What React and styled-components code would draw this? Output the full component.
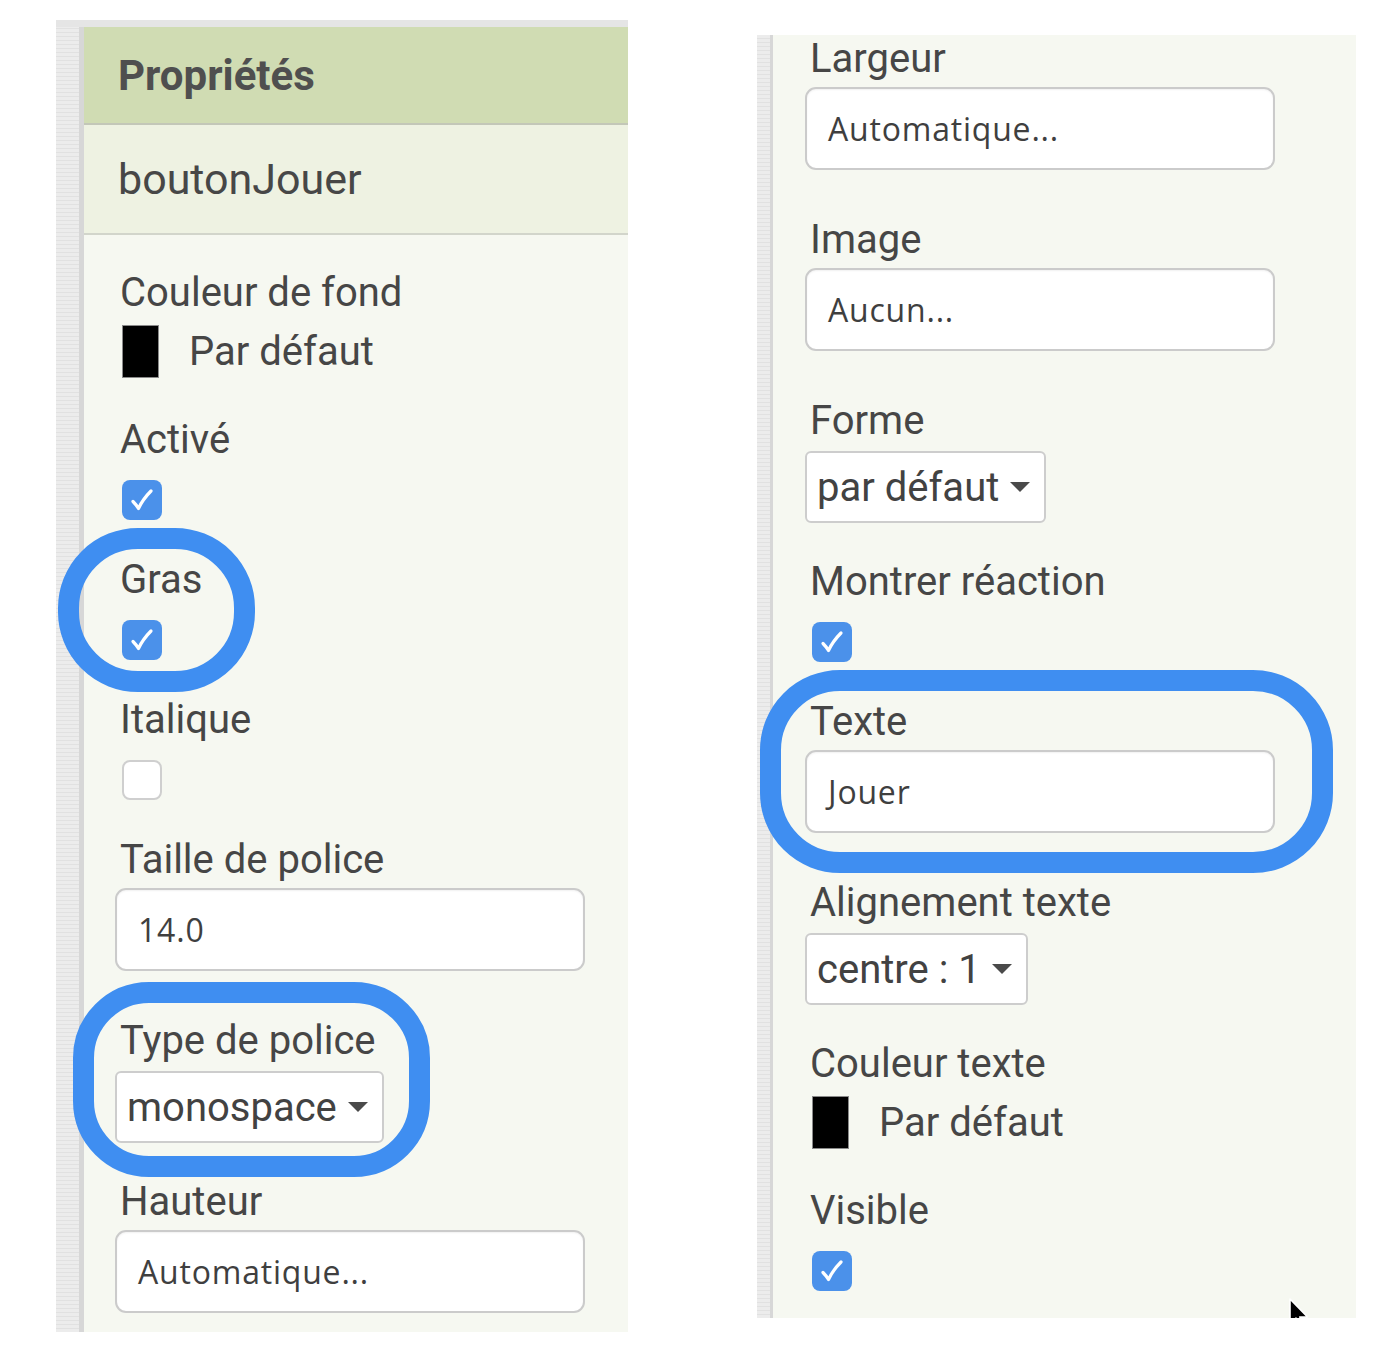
import React from 'react';
import styled, { createGlobalStyle } from 'styled-components';

const GlobalStyle = createGlobalStyle`
  html, body {
    margin: 0;
    background: #ffffff;
  }
  body {
    font-family: Roboto, "Liberation Sans", sans-serif;
    color: #484848;
  }
`;

const Page = styled.div`
  display: flex;
  align-items: flex-start;
  gap: 129px;
  padding: 20px 0 0 56px;
`;

const Panel = styled.section`
  position: relative;
  display: flex;
  box-sizing: border-box;
  width: ${p => p.width}px;
  height: ${p => p.height}px;
  margin-top: ${p => p.offset || 0}px;
  overflow: hidden;
  background: #f6f8f1;
  border-top: ${p => (p.topStrip ? '7px solid #e5e5e5' : 'none')};
`;

const Rail = styled.div`
  flex: 0 0 auto;
  width: ${p => p.width}px;
  box-sizing: border-box;
  background: repeating-linear-gradient(
    0deg,
    #ececec 0 3px,
    #e1e1e1 3px 4px
  );
  border-right: ${p => p.line}px solid #d7d7d7;
`;

const Body = styled.div`
  flex: 1;
  display: flex;
  flex-direction: column;
  min-width: 0;

  & > * {
    flex-shrink: 0;
  }
`;

const Header = styled.div`
  display: flex;
  align-items: center;
  height: 96px;
  padding-left: 34px;
  background: #d0dcb3;
  border-bottom: 2px solid #c3c7b8;
  font-size: 42px;
  font-weight: 700;
  color: #4f4f4f;
`;

const NameRow = styled.div`
  display: flex;
  align-items: center;
  height: 108px;
  padding-left: 34px;
  background: #eef2e2;
  border-bottom: 2px solid #d2d5cb;
  font-size: 43px;
  color: #474747;
`;

const Content = styled.div`
  display: flex;
  flex-direction: column;
  align-items: flex-start;
  padding: ${p => p.top}px 0 0 ${p => p.left}px;
`;

const spacing = { color: 40, check: 38, input: 48, select: 37 };

const Property = styled.div`
  position: relative;
  align-self: stretch;
  display: flex;
  flex-direction: column;
  align-items: flex-start;
  margin-bottom: ${p => spacing[p.kind]}px;
`;

const Label = styled.div`
  padding-left: 5px;
  font-size: 40px;
  line-height: 44px;
  color: #464646;
  white-space: nowrap;
`;

const ColorRow = styled.div`
  display: flex;
  align-items: center;
  margin-top: 10px;
  margin-left: 7px;
  font-size: 40px;
  line-height: 44px;
  color: #464646;
`;

const Swatch = styled.div`
  width: 37px;
  height: 53px;
  box-sizing: border-box;
  background: #000;
  border: 1px solid #8a8a8a;
  margin-right: 30px;
`;

const Box = styled.div`
  display: flex;
  align-items: center;
  justify-content: center;
  width: 40px;
  height: 40px;
  box-sizing: border-box;
  margin-top: 18px;
  margin-left: 7px;
  border-radius: 8px;
  background: ${p => (p.checked ? '#4b91ea' : '#ffffff')};
  border: ${p => (p.checked ? 'none' : '2px solid #cfcfcf')};
`;

const TextBox = styled.div`
  display: flex;
  align-items: center;
  box-sizing: border-box;
  width: 470px;
  height: 83px;
  margin-top: 6px;
  padding-left: 21px;
  background: #ffffff;
  border: 2px solid #cbcbcb;
  border-radius: 11px;
  box-shadow: inset 0 1px 2px rgba(0, 0, 0, 0.06);
  font-family: "Open Sans", "DejaVu Sans", sans-serif;
  font-size: 32px;
  letter-spacing: 0.8px;
  color: #3f3f3f;
`;

const Dropdown = styled.div`
  display: inline-flex;
  align-items: center;
  gap: 11px;
  box-sizing: border-box;
  height: 72px;
  margin-top: 8px;
  padding: 0 14px 0 10px;
  background: #ffffff;
  border: 2px solid #cdcdcd;
  border-radius: 6px;
  font-size: 40px;
  color: #424242;
  white-space: nowrap;
`;

const Ring = styled.div`
  position: absolute;
  z-index: 2;
  top: ${p => p.top}px;
  left: ${p => p.left}px;
  width: ${p => p.w}px;
  height: ${p => p.h}px;
  box-sizing: border-box;
  border: 21px solid #3f8ef1;
  border-radius: ${p => p.r}px;
  pointer-events: none;
`;

const Cursor = styled.svg`
  position: absolute;
  z-index: 3;
  left: 531px;
  top: 1262px;
`;

const Check = () => (
  <svg width="40" height="40" viewBox="0 0 40 40">
    <path
      d="M11 21.5 C13 23.5 15 26 16.5 28.5 C19.5 22 24 16 29 11"
      fill="none"
      stroke="#ffffff"
      strokeWidth="3.2"
      strokeLinecap="round"
      strokeLinejoin="round"
    />
  </svg>
);

const Caret = () => (
  <svg width="20" height="11" viewBox="0 0 20 11">
    <polygon points="0,0 20,0 10,10" fill="#4a4a4a" />
  </svg>
);

const CheckField = ({ label, checked, ring }) => (
  <Property kind="check">
    {ring}
    <Label>{label}</Label>
    <Box checked={checked}>{checked && <Check />}</Box>
  </Property>
);

const InputField = ({ label, value, ring }) => (
  <Property kind="input">
    {ring}
    <Label>{label}</Label>
    <TextBox>{value}</TextBox>
  </Property>
);

const SelectField = ({ label, value, ring }) => (
  <Property kind="select">
    {ring}
    <Label>{label}</Label>
    <Dropdown>
      {value}
      <Caret />
    </Dropdown>
  </Property>
);

const ColorField = ({ label, value }) => (
  <Property kind="color">
    <Label>{label}</Label>
    <ColorRow>
      <Swatch />
      {value}
    </ColorRow>
  </Property>
);

export default function App() {
  return (
    <>
      <GlobalStyle />
      <Page>
        <Panel width={572} height={1312} topStrip>
          <Rail width={28} line={5} />
          <Body>
            <Header>Propriétés</Header>
            <NameRow>boutonJouer</NameRow>
            <Content top={36} left={31}>
              <ColorField label="Couleur de fond" value="Par défaut" />
              <CheckField label="Activé" checked />
              <CheckField
                label="Gras"
                checked
                ring={<Ring top={-30} left={-57} w={197} h={164} r={80} />}
              />
              <CheckField label="Italique" />
              <InputField label="Taille de police" value="14.0" />
              <SelectField
                label="Type de police"
                value="monospace"
                ring={<Ring top={-37} left={-42} w={357} h={195} r={76} />}
              />
              <InputField label="Hauteur" value="Automatique..." />
            </Content>
          </Body>
        </Panel>

        <Panel width={599} height={1283} offset={15}>
          <Rail width={16} line={3} />
          <Body>
            <Content top={2} left={32}>
              <InputField label="Largeur" value="Automatique..." />
              <InputField label="Image" value="Aucun..." />
              <SelectField label="Forme" value="par défaut" />
              <CheckField label="Montrer réaction" checked />
              <InputField
                label="Texte"
                value="Jouer"
                ring={<Ring top={-30} left={-45} w={573} h={203} r={80} />}
              />
              <SelectField label="Alignement texte" value="centre : 1" />
              <ColorField label="Couleur texte" value="Par défaut" />
              <CheckField label="Visible" checked />
            </Content>
          </Body>
          <Cursor width="24" height="34" viewBox="0 0 24 34">
            <path
              d="M2 2 L2 27 L8 21 L12.5 31 L16 29.5 L11.8 20 L19.5 20 Z"
              fill="#000"
              stroke="#fff"
              strokeWidth="1.6"
              strokeLinejoin="round"
            />
          </Cursor>
        </Panel>
      </Page>
    </>
  );
}
